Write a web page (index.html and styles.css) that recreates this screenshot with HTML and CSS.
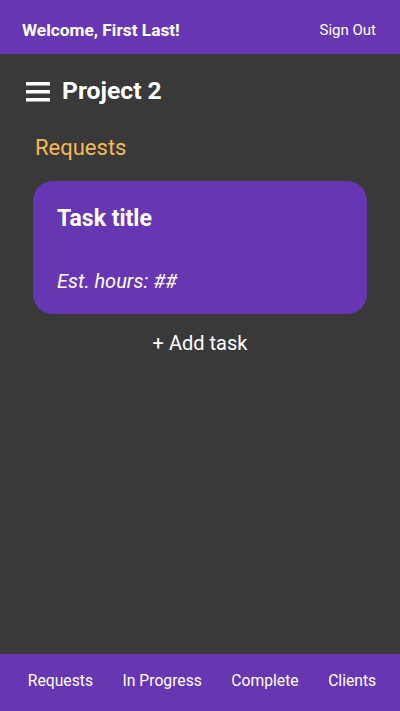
FILE: index.html
```html
<!DOCTYPE html>
<html>
<head>
<meta charset="utf-8">
<link rel="stylesheet" href="styles.css">
</head>
<body>
<div class="app">
  <header class="topbar">
    <span class="welcome">Welcome, First Last!</span>
    <span class="signout">Sign Out</span>
  </header>
  <main class="content">
    <div class="project">
      <svg class="menu" width="24" height="20" viewBox="0 0 24 20">
        <rect x="0" y="0" width="24" height="3.5" fill="#fff"/>
        <rect x="0" y="8" width="24" height="3.5" fill="#fff"/>
        <rect x="0" y="16" width="24" height="3.5" fill="#fff"/>
      </svg>
      <h1 class="project-title">Project 2</h1>
    </div>
    <h2 class="section">Requests</h2>
    <div class="card">
      <div class="card-title">Task title</div>
      <div class="card-hours">Est. hours: ##</div>
    </div>
    <div class="add">+ Add task</div>
  </main>
  <nav class="bottombar">
    <span>Requests</span>
    <span>In Progress</span>
    <span>Complete</span>
    <span>Clients</span>
  </nav>
</div>
</body>
</html>
```
FILE: styles.css
```css
* { box-sizing: border-box; }
html, body { margin: 0; padding: 0; height: 100%; }
body {
  font-family: Roboto, "Liberation Sans", sans-serif;
  background: #393939;
  color: #fff;
}
.app {
  display: flex;
  flex-direction: column;
  height: 711px;
}
.topbar {
  height: 54px;
  background: #6737b3;
  display: flex;
  align-items: center;
  justify-content: space-between;
  padding: 6px 24px 0 22px;
  flex-shrink: 0;
}
.welcome { font-weight: 700; font-size: 17.3px; }
.signout { font-size: 15px; }
.content {
  flex: 1;
  display: flex;
  flex-direction: column;
  padding: 0 33px;
}
.project {
  display: flex;
  align-items: center;
  margin: 24px 0 0 -7px;
  height: 26px;
}
.menu { margin-right: 12px; margin-top: 1px; }
.project-title {
  margin: 0;
  font-size: 24.7px;
  font-weight: 700;
  line-height: 26px;
}
.section {
  margin: 31px 0 0 2px;
  font-size: 22px;
  font-weight: 400;
  color: #f6b957;
  line-height: 26px;
}
.card {
  margin-top: 20px;
  height: 133px;
  background: #6737b3;
  border-radius: 20px;
  padding: 26px 24px 0 24px;
  display: flex;
  flex-direction: column;
}
.card-title { font-size: 23px; font-weight: 700; line-height: 24px; }
.card-hours { font-size: 20px; font-style: italic; line-height: 24px; margin-top: 38px; }
.add {
  text-align: center;
  font-size: 20px;
  line-height: 24px;
  margin-top: 17px;
}
.bottombar {
  height: 57px;
  background: #6737b3;
  display: flex;
  align-items: center;
  justify-content: center;
  gap: 29.5px;
  font-size: 15.7px;
  flex-shrink: 0;
  padding: 0 0 4px 4px;
}
```
